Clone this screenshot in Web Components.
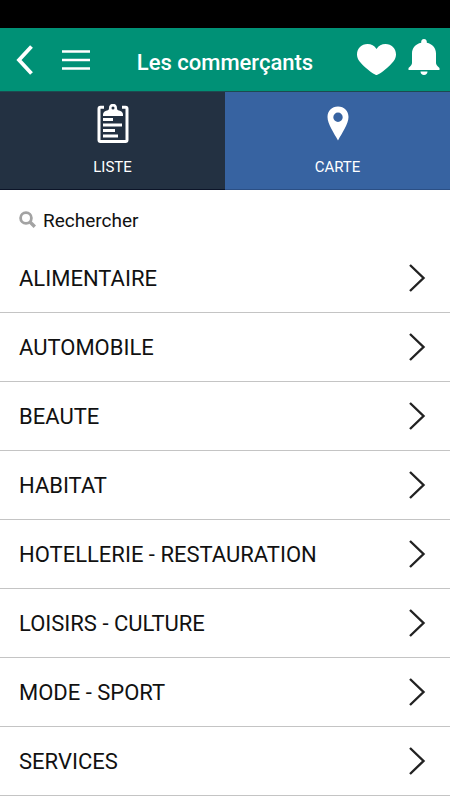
<!DOCTYPE html>
<html lang="fr">
<head>
<meta charset="utf-8">
<meta name="viewport" content="width=device-width, initial-scale=1">
<title>Les commerçants</title>
<style>
    body {
        margin: 0;
        background: #fff;
        color: #111;
        font-family: Roboto, "Liberation Sans", sans-serif;
    }
</style>
</head>
<body>
<merchants-page></merchants-page>

<script>
class AppHeader extends HTMLElement {
    constructor() {
        super();
        this.attachShadow({ mode: "open" });
        this.render();
    }

    render() {
        this.shadowRoot.innerHTML = `
            <style>
                :host {
                    display: block;
                    border-top: 28px solid #000;
                    background: #009176;
                    color: #fff;
                }

                header {
                    display: grid;
                    grid-template-columns: 1fr auto 1fr;
                    align-items: center;
                    height: 63px;
                    padding: 0 10px;
                }

                h1 {
                    margin: 0;
                    padding-top: 6px;
                    font-size: 22px;
                    font-weight: 500;
                    line-height: 26px;
                }

                .group {
                    display: flex;
                    align-items: center;
                    gap: 28px;
                    padding-left: 6px;
                }

                .right {
                    align-items: flex-end;
                    justify-content: flex-end;
                    gap: 12px;
                    padding: 0 0 5px;
                }

                button {
                    display: block;
                    padding: 0;
                    border: 0;
                    background: none;
                    color: inherit;
                }

                svg {
                    display: block;
                }
            </style>

            <header>
                <div class="group">
                    <button aria-label="Retour">
                        <svg width="18" height="30" viewBox="0 0 18 30">
                            <path d="M15.500 1.500 3 15 15.500 28.500" fill="none" stroke="currentColor" stroke-width="3.800"/>
                        </svg>
                    </button>
                    <button aria-label="Menu">
                        <svg width="28" height="20" viewBox="0 0 28 20">
                            <path d="M0 1.500h28M0 10h28M0 18.500h28" stroke="currentColor" stroke-width="2.400"/>
                        </svg>
                    </button>
                </div>
                <h1><slot></slot></h1>
                <div class="group right">
                    <button aria-label="Favoris">
                        <svg width="39" height="31" viewBox="0 0 39 31">
                            <path d="M19.500 31C18.500 31 14 28.500 9 24 3.500 19 0 15.500 0 10.500 0 4.500 4.500 0 10.500 0c3.800 0 7 1.800 9 5 2-3.200 5.200-5 9-5C34.500 0 39 4.500 39 10.500 39 15.500 35.500 19 30 24 25 28.500 20.500 31 19.500 31Z" fill="currentColor"/>
                        </svg>
                    </button>
                    <button aria-label="Notifications">
                        <svg width="32" height="36" viewBox="0 0 32 36">
                            <path d="M16 0c1.700 0 2.800 1.100 2.800 2.800v.9C24.500 4.900 28 9 28 14.500V24c0 1.500 1 2.700 3.500 5v2H.500v-2C3 26.700 4 25.500 4 24v-9.500C4 9 7.500 4.900 13.200 3.700v-.9C13.200 1.100 14.300 0 16 0ZM12.500 32.500h7c0 2-1.500 3.500-3.500 3.500s-3.500-1.500-3.500-3.500Z" fill="currentColor"/>
                        </svg>
                    </button>
                </div>
            </header>
        `;
    }
}

class ViewTab extends HTMLElement {
    constructor() {
        super();
        this.attachShadow({ mode: "open" });
        this.render();
    }

    render() {
        this.shadowRoot.innerHTML = `
            <style>
                :host {
                    display: block;
                    flex: 1;
                }

                button {
                    display: flex;
                    flex-direction: column;
                    align-items: center;
                    gap: 13px;
                    width: 100%;
                    padding: 12px 0;
                    border: 0;
                    border-top: 1px solid #1d4a50;
                    border-bottom: 1px solid var(--tab-edge);
                    background: var(--tab-color);
                    color: #fff;
                    font: 15px/20px Roboto, "Liberation Sans", sans-serif;
                }

                ::slotted(svg) {
                    display: block;
                }
            </style>

            <button>
                <slot name="icon"></slot>
                <span><slot></slot></span>
            </button>
        `;
    }
}

class SearchField extends HTMLElement {
    constructor() {
        super();
        this.attachShadow({ mode: "open" });
        this.render();
    }

    render() {
        this.shadowRoot.innerHTML = `
            <style>
                :host {
                    display: block;
                }

                label {
                    display: flex;
                    align-items: center;
                    gap: 7px;
                    height: 54px;
                    padding: 8px 19px 0;
                    box-sizing: border-box;
                }

                svg {
                    flex: none;
                    margin-bottom: 3px;
                }

                input {
                    flex: 1;
                    min-width: 0;
                    padding: 0;
                    border: 0;
                    outline: 0;
                    background: none;
                    color: #111;
                    font: 19px/24px Roboto, "Liberation Sans", sans-serif;
                }

                input::placeholder {
                    color: #111;
                    opacity: 1;
                }
            </style>

            <label>
                <svg width="17" height="17" viewBox="0 0 17 17" fill="none" stroke="#a3a3a3" stroke-width="2.800">
                    <circle cx="7" cy="7" r="5.400"/>
                    <path d="m11 11 4.800 4.800" stroke-width="3.400"/>
                </svg>
                <input type="text" placeholder="Rechercher" aria-label="Rechercher">
            </label>
        `;
    }
}

class CategoryRow extends HTMLElement {
    constructor() {
        super();
        this.attachShadow({ mode: "open" });
        this.render();
    }

    render() {
        this.shadowRoot.innerHTML = `
            <style>
                :host {
                    display: block;
                    border-bottom: 1px solid #c4c4c4;
                }

                a {
                    display: flex;
                    align-items: center;
                    justify-content: space-between;
                    height: 68px;
                    padding: 0 24px 0 19px;
                    color: inherit;
                    font-size: 22px;
                    line-height: 28px;
                    text-decoration: none;
                }

                span {
                    padding-top: 2px;
                }
            </style>

            <a href="#">
                <span><slot></slot></span>
                <svg width="18" height="30" viewBox="0 0 18 30" aria-hidden="true">
                    <path d="M2 2 15.500 15 2 28" fill="none" stroke="#222" stroke-width="2.400"/>
                </svg>
            </a>
        `;
    }
}

class MerchantsPage extends HTMLElement {
    constructor() {
        super();
        this.attachShadow({ mode: "open" });
        this.render();
    }

    render() {
        const categories = [
            "ALIMENTAIRE",
            "AUTOMOBILE",
            "BEAUTE",
            "HABITAT",
            "HOTELLERIE - RESTAURATION",
            "LOISIRS - CULTURE",
            "MODE - SPORT",
            "SERVICES"
        ];

        this.shadowRoot.innerHTML = `
            <style>
                :host {
                    display: block;
                }

                nav {
                    display: flex;
                }

                .list {
                    --tab-color: #233142;
                    --tab-edge: #0c1428;
                }

                .map {
                    --tab-color: #3763a1;
                    --tab-edge: #2b4f85;
                }
            </style>

            <app-header>Les commerçants</app-header>
            <nav>
                <view-tab class="list">
                    <svg slot="icon" width="32" height="40" viewBox="0 0 32 40">
                        <path d="M7 3.300H3.500a1.500 1.500 0 0 0-1.500 1.500v31.200a1.500 1.500 0 0 0 1.500 1.500h25a1.500 1.500 0 0 0 1.500-1.500V4.800a1.500 1.500 0 0 0-1.500-1.500H25" fill="none" stroke="#fff" stroke-width="3"/>
                        <path d="M6 12V10.500C6 8 8 7 10 6.500c1.500-.4 2-1 2-2.500C12 1.500 13.500-.2 16-.2S20 1.500 20 4c0 1.500.5 2.100 2 2.500 2 .500 4 1.500 4 4V12Z" fill="#fff"/>
                        <circle cx="16" cy="4" r="1.500" fill="#233142"/>
                        <path d="M6 15.500h10M6 21h19M6 26.500h12M6 32h15" stroke="#fff" stroke-width="3"/>
                    </svg>
                    LISTE
                </view-tab>
                <view-tab class="map">
                    <svg slot="icon" width="22" height="40" viewBox="0 0 22 40">
                        <path d="M11 2.500C4.800 2.500.500 7 .500 13 .500 20 7 29 11 36.500 15 29 21.500 20 21.500 13c0-6-4.300-10.500-10.500-10.500Zm0 6a4.700 4.700 0 1 1 0 9.400 4.700 4.700 0 0 1 0-9.400Z" fill="#fff" fill-rule="evenodd"/>
                    </svg>
                    CARTE
                </view-tab>
            </nav>
            <main>
                <search-field></search-field>
                ${categories.map(name => `<category-row>${name}</category-row>`).join("")}
            </main>
        `;
    }
}

customElements.define("app-header", AppHeader);
customElements.define("view-tab", ViewTab);
customElements.define("search-field", SearchField);
customElements.define("category-row", CategoryRow);
customElements.define("merchants-page", MerchantsPage);
</script>
</body>
</html>
